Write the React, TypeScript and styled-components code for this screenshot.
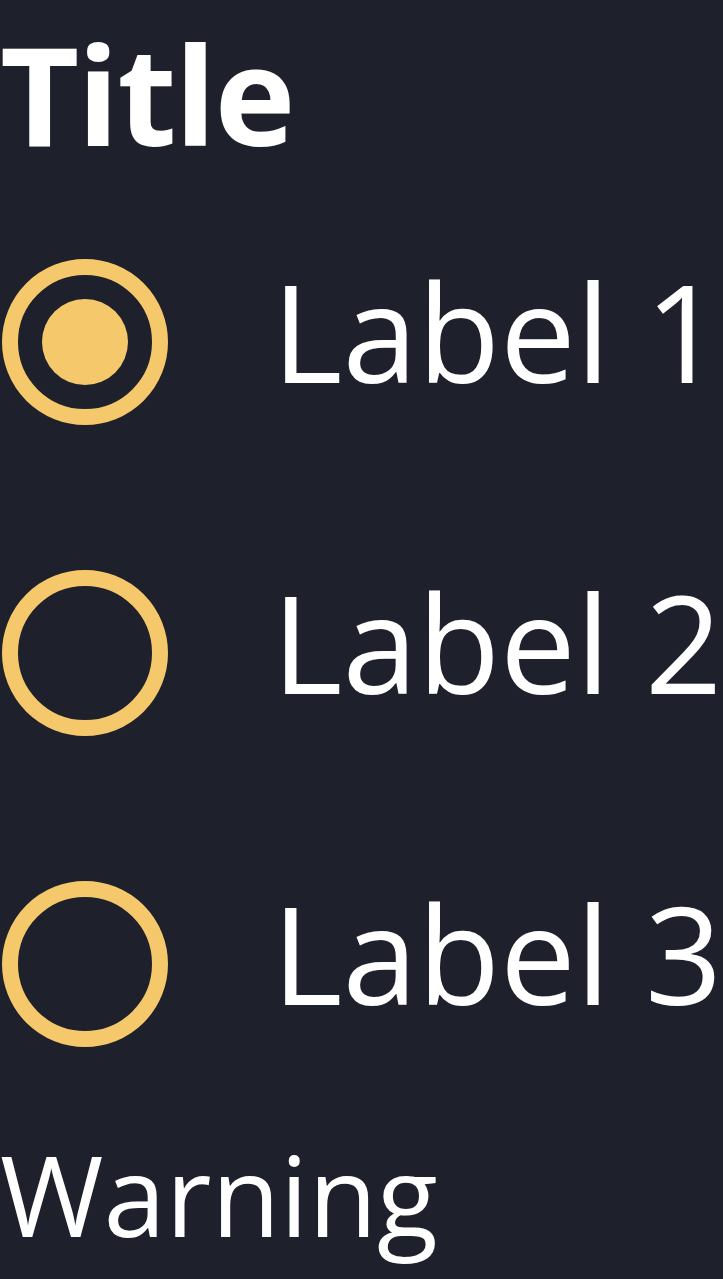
import React from "react";
import styled, { createGlobalStyle } from "styled-components";

const Global = createGlobalStyle`
  html, body { margin: 0; padding: 0; background: #1e202c; }
  body { font-family: "Open Sans", "Noto Sans", sans-serif; color: #ffffff; }
`;

const Page = styled.div`
  display: flex;
  flex-direction: column;
  min-height: 1279px;
  background: #1e202c;
`;

const Title = styled.h1`
  margin: 0;
  height: 186px;
  font-size: 137px;
  font-weight: 700;
  line-height: normal;
  letter-spacing: -2px;
`;

const Group = styled.div`
  display: flex;
  flex-direction: column;
`;

const Row = styled.label`
  display: flex;
  align-items: center;
  height: 311px;
  gap: 104px;
  padding-left: 2px;
`;

const Radio = styled.span<{ $checked?: boolean }>`
  box-sizing: border-box;
  width: 166px;
  height: 166px;
  border-radius: 50%;
  border: 16px solid #f5c96b;
  display: flex;
  align-items: center;
  justify-content: center;
  flex-shrink: 0;
  &::after {
    content: "";
    width: 86px;
    height: 86px;
    border-radius: 50%;
    background: #f5c96b;
    display: ${(p) => (p.$checked ? "block" : "none")};
  }
`;

const LabelText = styled.span`
  font-size: 135px;
  font-weight: 400;
  line-height: 1;
  margin-bottom: 20px;
  white-space: nowrap;
`;

const Warning = styled.div`
  font-size: 112px;
  line-height: 1;
  margin-top: 19px;
`;

export default function App() {
  const items = ["Label 1", "Label 2", "Label 3"];
  return (
    <Page>
      <Global />
      <Title>Title</Title>
      <Group>
        {items.map((t, i) => (
          <Row key={t}>
            <Radio $checked={i === 0} />
            <LabelText>{t}</LabelText>
          </Row>
        ))}
      </Group>
      <Warning>Warning</Warning>
    </Page>
  );
}
